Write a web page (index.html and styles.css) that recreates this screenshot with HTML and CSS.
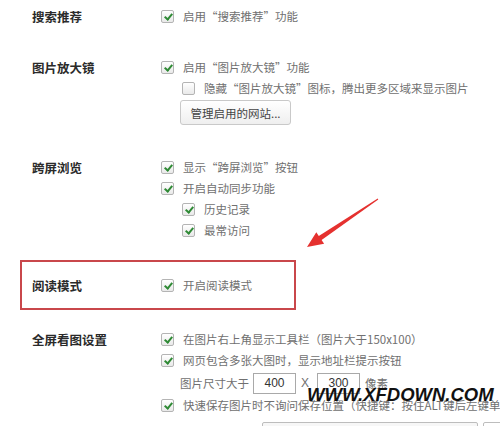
FILE: index.html
```html
<!DOCTYPE html>
<html lang="zh-CN">
<head>
<meta charset="utf-8">
<title>设置</title>
<link rel="stylesheet" href="styles.css">
</head>
<body>
<div class="page">
  <section class="group g-search">
    <div class="label">搜索推荐</div>
    <div class="opts">
      <div class="opt"><span class="cb on"></span>启用“搜索推荐”功能</div>
    </div>
  </section>

  <section class="group g-zoom">
    <div class="label">图片放大镜</div>
    <div class="opts">
      <div class="opt"><span class="cb on"></span>启用“图片放大镜”功能</div>
      <div class="opt sub"><span class="cb"></span>隐藏“图片放大镜”图标，腾出更多区域来显示图片</div>
      <div class="btn-row"><button class="btn">管理启用的网站...</button></div>
    </div>
  </section>

  <section class="group g-cross">
    <div class="label">跨屏浏览</div>
    <div class="opts">
      <div class="opt"><span class="cb on"></span>显示“跨屏浏览”按钮</div>
      <div class="opt"><span class="cb on"></span>开启自动同步功能</div>
      <div class="opt sub"><span class="cb on"></span>历史记录</div>
      <div class="opt sub"><span class="cb on"></span>最常访问</div>
    </div>
  </section>

  <section class="group g-read">
    <div class="label">阅读模式</div>
    <div class="opts">
      <div class="opt"><span class="cb on"></span>开启阅读模式</div>
    </div>
  </section>

  <section class="group g-full">
    <div class="label">全屏看图设置</div>
    <div class="opts">
      <div class="opt"><span class="cb on"></span>在图片右上角显示工具栏（图片大于150x100）</div>
      <div class="opt"><span class="cb on"></span>网页包含多张大图时，显示地址栏提示按钮</div>
      <div class="size-row">
        <span>图片尺寸大于</span>
        <span class="num">400</span>
        <span class="x">X</span>
        <span class="num">300</span>
        <span class="unit">像素</span>
      </div>
      <div class="opt"><span class="cb on"></span>快速保存图片时不询问保存位置（快捷键：按住ALT键后左键单击图片）</div>
      <div class="bottom-row"><span class="field wide"></span><span class="field"></span></div>
    </div>
  </section>
</div>

<svg class="arrow" viewBox="0 0 500 426" width="500" height="426" aria-hidden="true">
  <polygon points="377.7,198.6 318.8,235.9 316.3,232.2 307,247 324.1,243.8 321.6,240.1 378.3,199.4" fill="#e5312f"/>
</svg>
<div class="watermark">WWW.XFDOWN.COM</div>
</body>
</html>
```

FILE: styles.css
```css
html, body {
  margin: 0;
  padding: 0;
  background: #fff;
}
body {
  width: 500px;
  height: 426px;
  overflow: hidden;
  position: relative;
  font-family: "Noto Sans CJK SC", "Noto Sans", sans-serif;
}
.page {
  padding: 6px 0 0 32px;
}
.group {
  display: grid;
  grid-template-columns: 129px 1fr;
  line-height: 21px;
}
.label {
  font-size: 12.5px;
  font-weight: bold;
  color: #2a2a2a;
}
.opts {
  font-size: 11.5px;
  color: #707070;
  white-space: nowrap;
}
.opt {
  display: flex;
  align-items: center;
  height: 21px;
}
.opt.sub {
  padding-left: 21px;
}
.cb {
  position: relative;
  flex: none;
  width: 11px;
  height: 11px;
  margin-right: 9px;
  border: 1px solid #b4b4b4;
  border-radius: 2px;
  background: linear-gradient(#ffffff, #e9e9e9);
}
.cb.on::after {
  content: "";
  position: absolute;
  left: 3.5px;
  top: 1px;
  width: 3px;
  height: 6px;
  border-right: 2px solid #2f8a35;
  border-bottom: 2px solid #2f8a35;
  transform: rotate(40deg);
}
.btn-row {
  padding: 1px 0 0 19px;
}
.btn {
  width: 111px;
  height: 25px;
  padding: 0;
  font-family: inherit;
  font-size: 11.5px;
  color: #444;
  border: 1px solid #c9c9c9;
  border-radius: 3px;
  background: linear-gradient(#ffffff, #efefef);
}
.g-zoom { margin-top: 30px; }
.g-cross { margin-top: 32px; }
.g-read {
  margin: 19px 0 0 -12px;
  width: 262px;
  padding: 13px 0 12px 10px;
  border: 2px solid #c9474b;
}
.g-full { margin-top: 19px; }
.size-row {
  display: flex;
  align-items: center;
  height: 24px;
  padding-left: 19px;
}
.num {
  box-sizing: border-box;
  width: 43px;
  height: 21px;
  margin-left: 4px;
  border: 1px solid #a9a9a9;
  text-align: center;
  line-height: 19px;
  color: #333;
  font-family: "Liberation Sans", sans-serif;
  font-size: 12px;
}
.x {
  margin: 0 4px 0 5px;
  font-family: "Liberation Sans", sans-serif;
  font-size: 12px;
}
.unit { margin-left: 5px; }
.bottom-row {
  display: flex;
  gap: 5px;
  margin-top: 6px;
  padding-left: 101px;
}
.field {
  height: 22px;
  width: 214px;
  border: 1px solid #bdbdbd;
  background: #f7f7f7;
  border-radius: 2px;
}
.field:not(.wide) { width: 40px; background: #fff; }
.arrow {
  position: absolute;
  left: 0;
  top: 0;
  pointer-events: none;
}
.watermark {
  position: absolute;
  left: 307px;
  top: 385px;
  font-family: "Liberation Sans", sans-serif;
  font-weight: bold;
  font-style: italic;
  font-size: 18.5px;
  line-height: 19px;
  color: #111;
  white-space: nowrap;
}
```
